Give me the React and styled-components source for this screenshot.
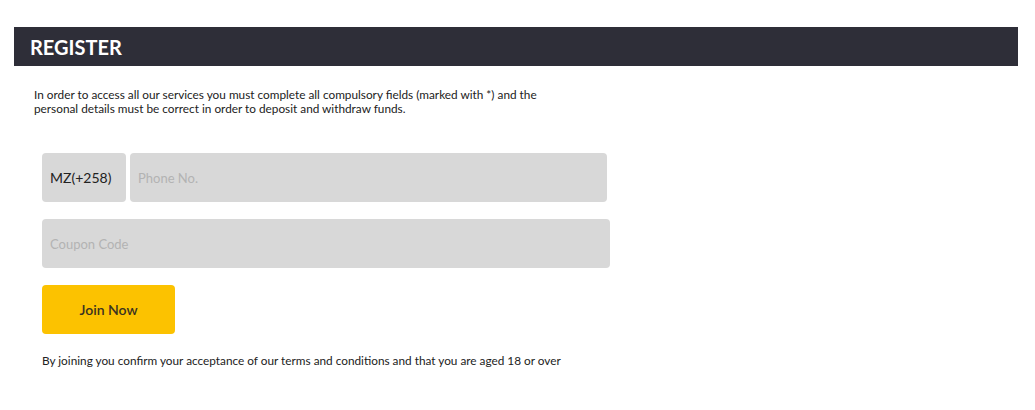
import React from "react"
import styled, { createGlobalStyle } from "styled-components"

const Global = createGlobalStyle`
  body {
    margin: 0;
    background: #fff;
    font-family: Lato, "Liberation Sans", sans-serif;
  }
`

const Page = styled.div`
  padding: 27px 17px 0 14px;
`

const Header = styled.div`
  height: 39px;
  background: #2e2e38;
  display: flex;
  align-items: center;
  padding-left: 16px;
  color: #fff;
  font-size: 20px;
  font-weight: 700;
`

const Intro = styled.p`
  margin: 22px 0 0 20px;
  width: 525px;
  font-size: 11.8px;
  line-height: 14px;
  color: #222;
`

const Form = styled.div`
  margin: 37px 0 0 28px;
  display: flex;
  flex-direction: column;
  gap: 17px;
  width: 568px;
`

const Row = styled.div`
  display: flex;
  gap: 4px;
`

const Prefix = styled.div`
  width: 84px;
  height: 49px;
  flex: none;
  box-sizing: border-box;
  display: flex;
  align-items: center;
  padding-left: 8px;
  background: #d8d8d8;
  border-radius: 4px;
  font-size: 14px;
  color: #222;
`

const Input = styled.input`
  flex: none;
  width: ${p => p.$width};
  height: 49px;
  box-sizing: border-box;
  border: none;
  border-radius: 4px;
  background: #d8d8d8;
  padding: 0 8px;
  font-family: inherit;
  font-size: 13px;
  color: #222;
  outline: none;
  &::placeholder {
    color: #b3b3b3;
  }
`

const Button = styled.button`
  width: 133px;
  height: 49px;
  border: none;
  border-radius: 4px;
  background: #fcc200;
  font-family: inherit;
  font-size: 14px;
  font-weight: 600;
  color: #3a3220;
  cursor: pointer;
`

const Note = styled.p`
  margin: 19px 0 0 28px;
  font-size: 11.8px;
  color: #222;
`

export default function App() {
  return (
    <>
      <Global />
      <Page>
        <Header>REGISTER</Header>
        <Intro>
          In order to access all our services you must complete all compulsory
          fields (marked with *) and the personal details must be correct in
          order to deposit and withdraw funds.
        </Intro>
        <Form>
          <Row>
            <Prefix>MZ(+258)</Prefix>
            <Input $width="477px" placeholder="Phone No." />
          </Row>
          <Input $width="568px" placeholder="Coupon Code" />
          <Button>Join Now</Button>
        </Form>
        <Note>
          By joining you confirm your acceptance of our terms and conditions
          and that you are aged 18 or over
        </Note>
      </Page>
    </>
  )
}
